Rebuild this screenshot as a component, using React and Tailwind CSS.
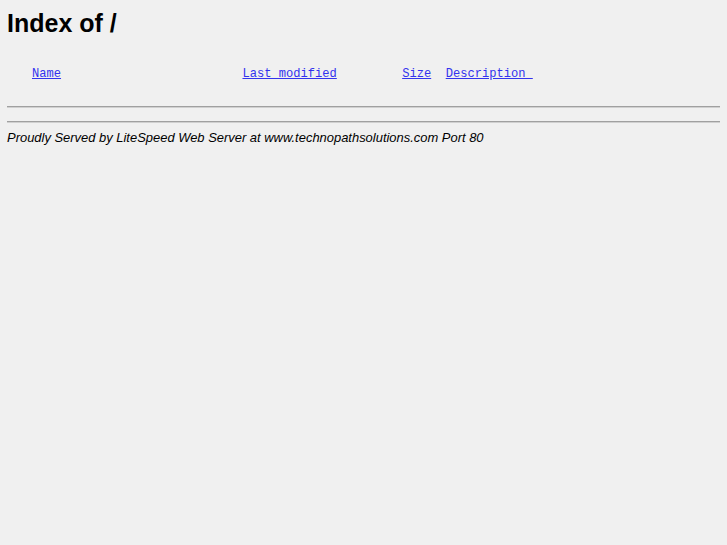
export default function App() {
  const mono = { fontFamily: '"Liberation Mono", "DejaVu Sans Mono", monospace' };
  return (
    <div className="min-h-[545px] bg-[#f0f0f0] px-[7px] pt-[9px] font-['Liberation_Sans',Arial,sans-serif] text-black">
      <h1 className="text-[25px] font-bold leading-[28px]">Index of /</h1>
      <pre className="mt-[30px] pl-[25px] text-[12.1px] leading-[14px]" style={mono}>
        <a href="#" className="text-[#3333ee] underline">Name</a>
        {'                         '}
        <a href="#" className="text-[#3333ee] underline">Last modified</a>
        {'         '}
        <a href="#" className="text-[#3333ee] underline">Size</a>
        {'  '}
        <a href="#" className="text-[#3333ee] underline">Description </a>
      </pre>
      <hr className="mt-[25px] h-[2px] border-0 border-t border-b border-t-[#a0a0a0] border-b-[#d0d0d0]" />
      <hr className="mt-[13px] h-[2px] border-0 border-t border-b border-t-[#a0a0a0] border-b-[#d0d0d0]" />
      <address className="mt-[7px] text-[12.95px] italic leading-[15px]">
        Proudly Served by LiteSpeed Web Server at www.technopathsolutions.com Port 80
      </address>
    </div>
  );
}
